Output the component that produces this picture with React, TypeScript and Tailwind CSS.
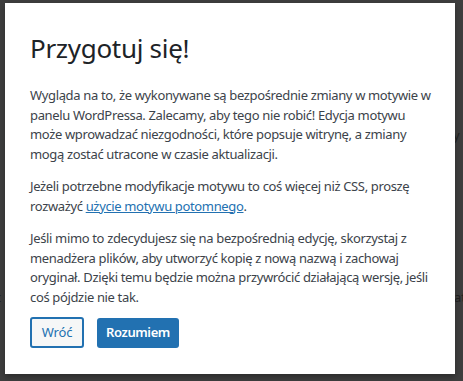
export default function App() {
  return (
    <div
      className="relative w-[463px] h-[381px] overflow-hidden bg-[#3e3e3e]"
      style={{ fontFamily: '"Noto Sans", "Open Sans", sans-serif' }}
    >
      {/* page text peeking out behind the overlay */}
      <span className="absolute left-[-6px] top-[128px] text-[13px] text-[#222]">s</span>
      <span className="absolute left-[453px] top-[126px] text-[13px] text-[#222]">y</span>
      <span className="absolute left-[-5px] top-[288px] text-[13px] text-[#222]">c</span>
      <span className="absolute left-[454px] top-[288px] text-[13px] text-[#222]">at</span>

      <div className="relative ml-[5px] mt-[3px] w-[450px] h-[371px] bg-white px-[25px] pt-[25px] shadow-[0_3px_6px_rgba(0,0,0,0.3)]">
        <h1 className="text-[26px] leading-[40px] tracking-[-0.3px] text-[#1d2327]">Przygotuj się!</h1>

        <div className="mt-[18px] whitespace-nowrap text-[13px] leading-[19.5px] tracking-[-0.35px] text-[#3c434a]">
          <p>
            Wygląda na to, że wykonywane są bezpośrednie zmiany w motywie w<br />
            panelu WordPressa. Zalecamy, aby tego nie robić! Edycja motywu<br />
            może wprowadzać niezgodności, które popsuje witrynę, a zmiany<br />
            mogą zostać utracone w czasie aktualizacji.
          </p>
          <p className="mt-[13px]">
            Jeżeli potrzebne modyfikacje motywu to coś więcej niż CSS, proszę<br />
            rozważyć{' '}
            <a href="#" className="text-[#2271b1] underline">użycie motywu potomnego</a>.
          </p>
          <p className="mt-[13px]">
            Jeśli mimo to zdecydujesz się na bezpośrednią edycję, skorzystaj z<br />
            menadżera plików, aby utworzyć kopię z nową nazwą i zachowaj<br />
            oryginał. Dzięki temu będzie można przywrócić działającą wersję, jeśli<br />
            coś pójdzie nie tak.
          </p>
        </div>

        <div className="mt-[10px] flex items-center gap-[13px]">
          <button className="h-[31px] w-[54px] rounded-[3px] border-2 border-[#2271b1] bg-[#f6f7f7] text-[13px] tracking-[-0.2px] text-[#2271b1]">
            Wróć
          </button>
          <button className="h-[30px] w-[82px] rounded-[3px] bg-[#2271b1] text-[13px] font-semibold tracking-[-0.4px] text-white">
            Rozumiem
          </button>
        </div>
      </div>
    </div>
  );
}
